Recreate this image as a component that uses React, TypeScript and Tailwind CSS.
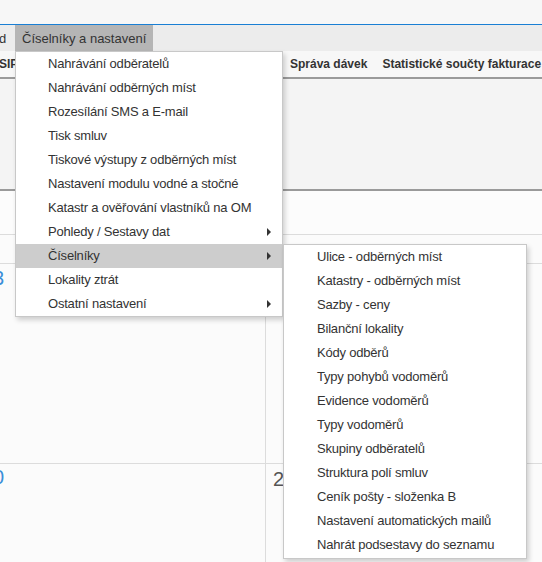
import React from 'react'

const mainItems: { label: string; sub?: boolean; active?: boolean }[] = [
  { label: 'Nahrávání odběratelů' },
  { label: 'Nahrávání odběrných míst' },
  { label: 'Rozesílání SMS a E-mail' },
  { label: 'Tisk smluv' },
  { label: 'Tiskové výstupy z odběrných míst' },
  { label: 'Nastavení modulu vodné a stočné' },
  { label: 'Katastr a ověřování vlastníků na OM' },
  { label: 'Pohledy / Sestavy dat', sub: true },
  { label: 'Číselníky', sub: true, active: true },
  { label: 'Lokality ztrát' },
  { label: 'Ostatní nastavení', sub: true },
]

const subItems = [
  'Ulice - odběrných míst',
  'Katastry - odběrných míst',
  'Sazby - ceny',
  'Bilanční lokality',
  'Kódy odběrů',
  'Typy pohybů vodoměrů',
  'Evidence vodoměrů',
  'Typy vodoměrů',
  'Skupiny odběratelů',
  'Struktura polí smluv',
  'Ceník pošty - složenka B',
  'Nastavení automatických mailů',
  'Nahrát podsestavy do seznamu',
]

const Arrow = () => (
  <span className="h-0 w-0 border-y-[4px] border-l-[4px] border-y-transparent border-l-[#333]" />
)

export default function App() {
  return (
    <div className="relative h-[562px] w-[542px] overflow-hidden bg-[#f7f7f7] font-['Liberation_Sans',Arial,sans-serif] text-[#333]">
      {/* top strip */}
      <div className="h-[25px] border-b border-[#1a7fd4]" />

      {/* menu bar */}
      <nav className="flex h-[26px] bg-[#ececec] text-[13px] leading-none">
        <div className="flex w-[15px] items-center overflow-hidden">
          <span className="-ml-[1px]">d</span>
        </div>
        <div className="flex items-center bg-[#b5b5b5] px-[7px]">Číselníky a nastavení</div>
      </nav>

      {/* tabs */}
      <div className="flex h-[28px] items-center whitespace-nowrap border-b-2 border-[#9a9a9a] text-[12px] font-bold">
        <div className="w-[290px] overflow-hidden">
          <span className="-ml-[1px]">SIPO</span>
        </div>
        <span>Správa dávek</span>
        <span className="ml-[15px]">Statistické součty fakturace</span>
      </div>

      {/* tab panel */}
      <div className="h-[112px] border-b-2 border-[#9a9a9a] bg-[#f4f4f4]" />

      <div className="h-[43px] bg-[#fcfcfc]" />

      {/* table */}
      <div className="grid grid-cols-[266px_1fr] border-t border-[#dcdcdc] bg-[#fbfbfb]">
        <div className="h-[29px] border-b border-r border-[#dcdcdc]" />
        <div className="flex h-[29px] items-start justify-center border-b border-[#dcdcdc] pt-[6px] text-[13px] font-bold">
          Počet aktivních
        </div>
        <div className="h-[200px] overflow-hidden border-b border-r border-[#dcdcdc] pt-[4px]">
          <div className="-ml-[7px] text-[20px] leading-5 text-[#3b8ed8]">3</div>
        </div>
        <div className="h-[200px] border-b border-[#dcdcdc]" />
        <div className="h-[100px] overflow-hidden border-r border-[#dcdcdc] pt-[3px]">
          <div className="-ml-[7px] text-[20px] leading-5 text-[#3b8ed8]">0</div>
        </div>
        <div className="h-[100px] pl-[7px] pt-[5px]">
          <div className="text-[20px] leading-5 text-[#555]">2</div>
        </div>
      </div>

      {/* dropdown */}
      <div className="absolute left-[15px] top-[51px] w-[268px] border border-[#c8c8c8] bg-white text-[13px] tracking-[-0.2px] shadow-[2px_3px_5px_rgba(0,0,0,0.18)]">
        {mainItems.map((it) => (
          <div
            key={it.label}
            className={`flex h-6 items-center justify-between pl-[32px] pr-[11px] ${it.active ? 'bg-[#cdcdcd]' : ''}`}
          >
            <span>{it.label}</span>
            {it.sub && <Arrow />}
          </div>
        ))}
      </div>

      {/* submenu */}
      <div className="absolute left-[283px] top-[244px] w-[244px] border border-[#c8c8c8] bg-white pb-px text-[13px] tracking-[-0.2px] shadow-[2px_3px_5px_rgba(0,0,0,0.18)]">
        {subItems.map((s) => (
          <div key={s} className="flex h-6 items-center pl-[33px]">
            {s}
          </div>
        ))}
      </div>
    </div>
  )
}
